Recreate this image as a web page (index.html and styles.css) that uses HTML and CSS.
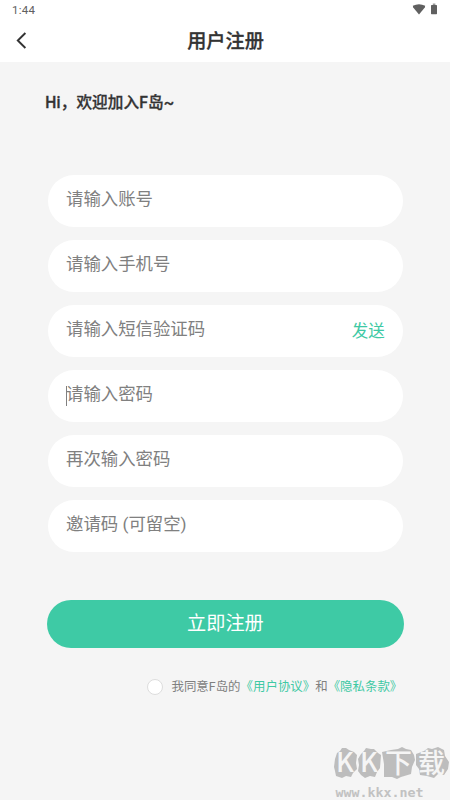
FILE: index.html
```html
<!DOCTYPE html>
<html lang="zh-CN">
<head>
<meta charset="utf-8">
<title>用户注册</title>
<link rel="stylesheet" href="styles.css">
</head>
<body>
<div class="status">
  <span class="time">1:44</span>
  <svg class="status-icons" width="28" height="14" viewBox="0 0 28 14">
    <path d="M.8 2.8Q7 -.2 13.2 2.8L12.8 4.6 7 11.4 1.2 4.6Z" fill="#606060"/>
    <path d="M20.8 .5h2.6v1.6h-2.6z" fill="#999"/>
    <rect x="19" y="1.9" width="6" height="9.3" rx=".6" fill="#606060"/>
  </svg>
</div>
<header class="bar">
  <svg class="back" width="12" height="18" viewBox="0 0 12 18"><path d="M10.4 1 2.8 8.5 10.4 16" fill="none" stroke="#333" stroke-width="1.9"/></svg>
  <h1 class="title">用户注册</h1>
</header>
<main class="content">
  <p class="hello">Hi，欢迎加入F岛~</p>
  <form class="fields">
    <div class="field">请输入账号</div>
    <div class="field">请输入手机号</div>
    <div class="field">请输入短信验证码<span class="send">发送</span></div>
    <div class="field focused">请输入密码</div>
    <div class="field">再次输入密码</div>
    <div class="field">邀请码 (可留空)</div>
  </form>
  <div class="submit">立即注册</div>
  <div class="agree"><i class="radio"></i><span class="terms">我同意F岛的<a>《用户协议》</a>和<a>《隐私条款》</a></span></div>
</main>
<div class="mark">
  <svg width="125" height="60" viewBox="0 0 125 60">
    <g fill="#bdbdbd">
      <path d="M12 13 15 11 17 8 21 8 24 10 29 12 32 15 31 23 32 29 28 33 26 37 21 36 17 38 11 36 10 31 9 27 10 19Z"/>
      <path d="M36 14 39 11 41 8 46 9 49 9 53 13 56 15 55 28 52 32 50 37 45 36 40 38 36 35 33 31 34 25 33 19Z"/>
      <path d="M57 12 66 10 73 9 77 7 81 9 86 10 89 15 90 20 87 27 86 34 76 37 72 39 67 37 59 37 59 24Z"/>
      <path d="M91 14 99 11 103 8 107 9 113 7 119 10 120 16 124 22 123 29 119 35 113 34 109 38 102 36 95 35 94 29 91 25Z"/>
    </g>
    <g class="mark-name"><text x="11" y="32">K</text><text x="35" y="32">K</text><text x="60" y="33">下</text><text x="93" y="33">载</text></g>
    <text class="mark-url" x="10.5" y="57" textLength="88" lengthAdjust="spacingAndGlyphs">www.kkx.net</text>
  </svg>
</div>
</body>
</html>
```
FILE: styles.css
```css
* { box-sizing: border-box; }
body {
  margin: 0;
  height: 800px;
  overflow: hidden;
  position: relative;
  background: #f5f5f5;
  color: #333;
  font-family: Roboto, "Noto Sans CJK SC", sans-serif;
}
.status {
  height: 20px;
  padding: 0 11px 0 12px;
  display: flex;
  justify-content: space-between;
  align-items: center;
  background: #fff;
}
.time { font: 400 11.5px/20px Roboto, sans-serif; color: #606060; letter-spacing: .3px; }
.status-icons { margin-right: -1px; }
.bar {
  height: 42px;
  padding-left: 15px;
  display: grid;
  grid-template-columns: 12px 1fr 26px;
  align-items: center;
  background: #fff;
}
.title { margin: 0; text-align: center; font-family: "Noto Sans CJK SC", sans-serif; font-size: 19.2px; line-height: 40px; height: 42px; font-weight: 500; -webkit-text-stroke: .3px #333; }
.content { padding: 28px 46.5px 0 47.3px; }
.hello { margin: 0 0 0 -2px; padding-top: 1px; height: 24px; font-size: 15.6px; line-height: 25px; font-weight: 500; letter-spacing: .15px; -webkit-text-stroke: .3px #333; }
.fields { margin: 61px 0 0 .7px; display: grid; gap: 13px; }
.field {
  height: 52px;
  width: 354.7px;
  padding: 0 18px;
  display: flex;
  justify-content: space-between;
  border-radius: 26px;
  background: #fff;
  color: #808080;
  font-size: 17.4px;
  line-height: 49px;
}
.send { color: #3ec9a4; font-size: 16.5px; line-height: 54px; }
.focused { position: relative; }
.focused::before {
  content: "";
  position: absolute;
  left: 18px;
  top: 16px;
  width: 1px;
  height: 20px;
  background: #808080;
}
.submit {
  margin-top: 48px;
  height: 47.5px;
  border-radius: 24px;
  background: #3ecaa5;
  color: #fff;
  font-size: 19.2px;
  line-height: 48px;
  text-align: center;
}
.agree {
  margin: 28.5px 0 0 99.7px;
  height: 22px;
  display: flex;
  align-items: center;
  gap: 8.5px;
  white-space: nowrap;
  color: #808080;
  font-size: 12.45px;
  line-height: 22px;
}
.agree a { color: #3ec9a4; }
.radio { width: 16px; height: 16px; flex: none; border: 1px solid #ddd; border-radius: 50%; background: #fff; }
.mark { position: absolute; left: 325px; top: 740px; width: 125px; height: 60px; }
.mark svg { display: block; }
.mark-name { fill: #f5f5f5; font-family: "Noto Sans CJK SC", sans-serif; font-size: 27px; font-weight: 500; }
.mark-url { fill: #c2c2c2; font: bold 11.5px "DejaVu Sans Mono", monospace; }
```
